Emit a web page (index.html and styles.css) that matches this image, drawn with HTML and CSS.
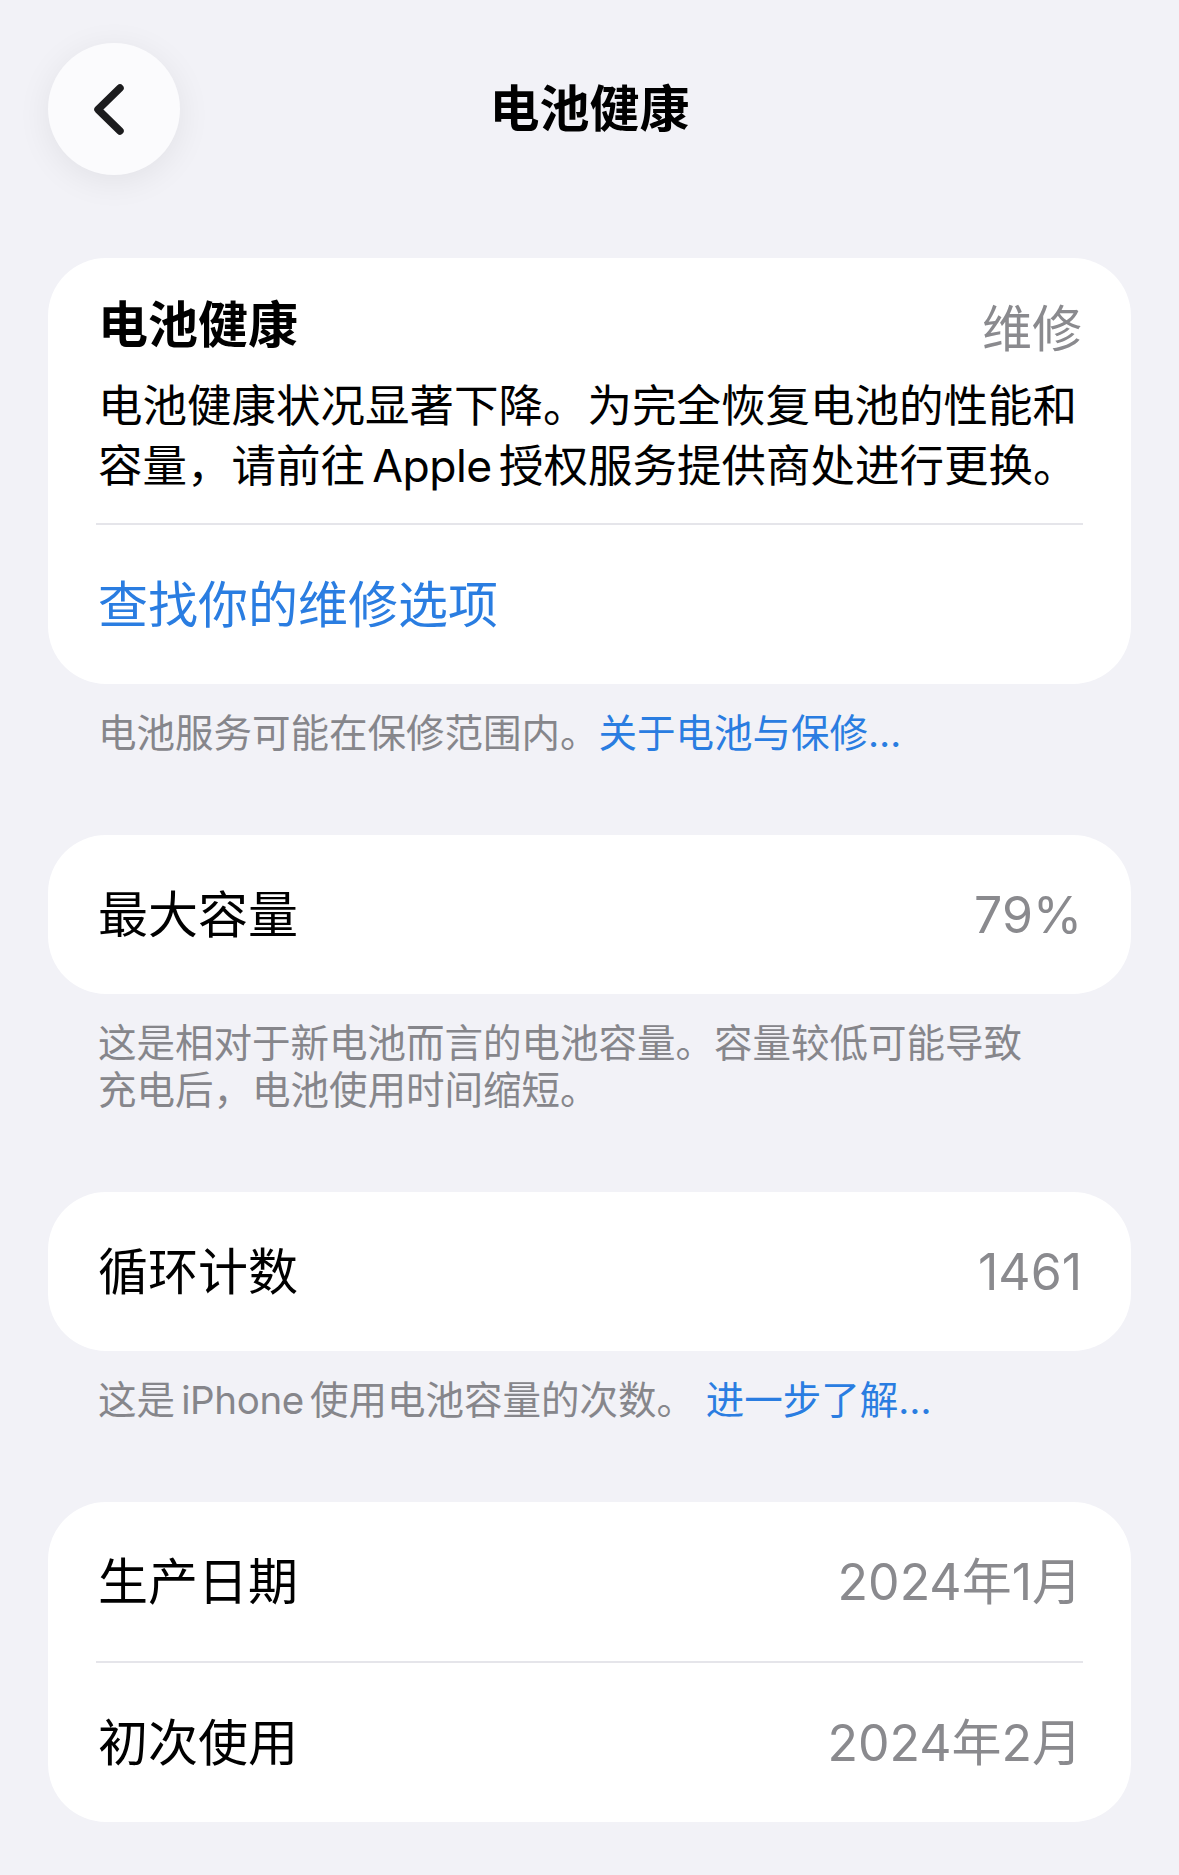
FILE: index.html
```html
<!DOCTYPE html>
<html lang="zh-CN">
<head>
  <meta charset="UTF-8">
  <meta name="viewport" content="width=device-width, initial-scale=1.0">
  <title>电池健康</title>
  <link rel="stylesheet" href="styles.css">
</head>
<body>
  <header class="nav">
    <button class="back" aria-label="返回">
      <svg width="132" height="132" viewBox="0 0 132 132">
        <path d="M72 45 L50 66.5 L72 88" fill="none" stroke="#1c1c1e" stroke-width="7.5" stroke-linecap="round" stroke-linejoin="round"/>
      </svg>
    </button>
    <h1 class="nav-title">电池健康</h1>
    <span></span>
  </header>

  <main class="content">
    <section class="group">
      <div class="card">
        <div class="health">
          <div class="health-head">
            <h2>电池健康</h2>
            <span class="value">维修</span>
          </div>
          <p class="health-desc">电池健康状况显著下降。为完全恢复电池的性能和<br>容量，请前往<span class="latin">Apple</span>授权服务提供商处进行更换。</p>
        </div>
        <div class="sep"></div>
        <a class="row link-row" href="#">查找你的维修选项</a>
      </div>
      <p class="footer">电池服务可能在保修范围内。<a href="#">关于电池与保修…</a></p>
    </section>

    <section class="group">
      <div class="card">
        <div class="row">
          <span class="label">最大容量</span>
          <span class="value">79%</span>
        </div>
      </div>
      <p class="footer">这是相对于新电池而言的电池容量。容量较低可能导致<br>充电后，电池使用时间缩短。</p>
    </section>

    <section class="group">
      <div class="card">
        <div class="row">
          <span class="label">循环计数</span>
          <span class="value">1461</span>
        </div>
      </div>
      <p class="footer">这是<span class="latin">iPhone</span>使用电池容量的次数。 <a href="#">进一步了解…</a></p>
    </section>

    <section class="group">
      <div class="card">
        <div class="row">
          <span class="label">生产日期</span>
          <span class="value">2024年1月</span>
        </div>
        <div class="sep"></div>
        <div class="row">
          <span class="label">初次使用</span>
          <span class="value">2024年2月</span>
        </div>
      </div>
    </section>
  </main>
</body>
</html>
```

FILE: styles.css
```css
* {
  margin: 0;
  padding: 0;
  box-sizing: border-box;
}
body {
  font-family: Inter, "Noto Sans CJK SC", sans-serif;
  background-color: #f2f2f7;
  color: #000;
}
.nav {
  display: grid;
  grid-template-columns: 132px 1fr 132px;
  align-items: center;
  padding: 43px 48px 0;
}
.back {
  width: 132px;
  height: 132px;
  border: none;
  border-radius: 50%;
  background: #fbfbfd;
  box-shadow: 0 6px 34px rgba(0, 0, 0, 0.07);
  display: flex;
  align-items: center;
  justify-content: center;
  cursor: pointer;
}
.nav-title {
  text-align: center;
  font-size: 50px;
  font-weight: 700;
  line-height: 60px;
}
.content {
  padding: 83px 48px 0;
}
.card {
  background: #fff;
  border-radius: 58px;
  overflow: hidden;
}
.health {
  padding: 37px 49px 27px 50px;
}
.health-head {
  display: flex;
  justify-content: space-between;
  align-items: center;
  height: 60px;
}
.health-head h2 {
  font-size: 50px;
  font-weight: 700;
  line-height: 60px;
}
.health-desc {
  margin-top: 21px;
  font-size: 44.5px;
  line-height: 60px;
  white-space: nowrap;
}
.latin {
  margin: 0 0.16em;
  letter-spacing: -0.01em;
}
.sep {
  height: 2px;
  background: #e5e5ea;
  margin: 0 48px;
}
.row {
  display: flex;
  justify-content: space-between;
  align-items: center;
  height: 159px;
  padding: 0 49px 0 50px;
  font-size: 50px;
  line-height: 60px;
  text-decoration: none;
}
.value {
  color: #8a8a8e;
  font-size: 50px;
  font-weight: 400;
}
.link-row {
  color: #2a7de1;
}
.footer {
  padding: 26px 50px 0;
  margin-bottom: 78px;
  font-size: 38.5px;
  line-height: 47px;
  color: #86868b;
}
.footer a {
  color: #2a7de1;
  text-decoration: none;
}
```
